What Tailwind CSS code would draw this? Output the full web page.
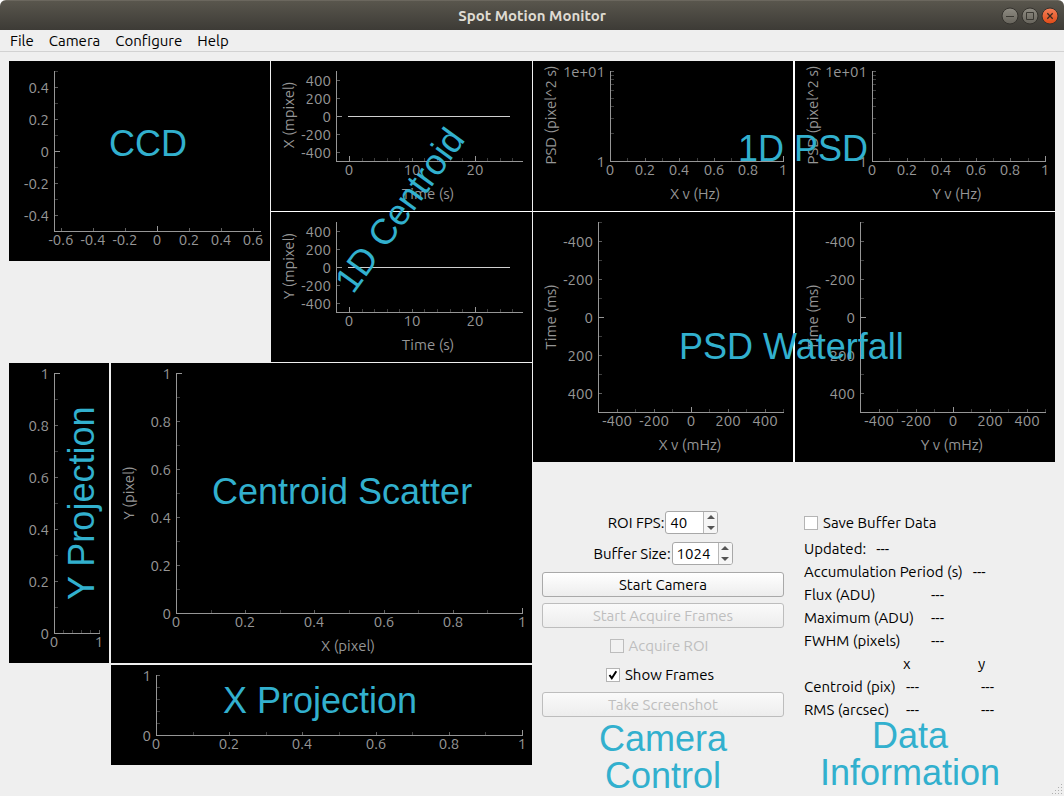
<!DOCTYPE html>
<html lang="en">
<head>
<meta charset="utf-8">
<meta name="viewport" content="width=device-width, initial-scale=1">
<title>Spot Motion Monitor</title>
<script src="https://cdn.jsdelivr.net/npm/@tailwindcss/browser@4"></script>
</head>
<body class="bg-white">
<div class="relative flex min-h-screen flex-col overflow-hidden rounded-t-md bg-[#efefef] font-['Ubuntu','Noto_Sans',sans-serif] text-[15px] leading-[23px] text-black">

  <header class="relative flex h-[30px] items-center justify-center border-t border-[#6b675e] bg-linear-to-b from-[#59564d] to-[#3d3b36]">
    <h1 class="font-bold text-[#dfdbd2]">Spot Motion Monitor</h1>
    <div class="absolute inset-y-0 right-[5px] flex items-center gap-[2px]">
      <button type="button" aria-label="Minimize" class="size-[18px]">
        <svg viewBox="0 0 18 18" class="size-full"><defs><linearGradient id="gray" x2="0" y2="1"><stop stop-color="#8f8c83"/><stop offset="1" stop-color="#66635b"/></linearGradient><linearGradient id="orange" x2="0" y2="1"><stop stop-color="#f58059"/><stop offset="1" stop-color="#df4a16"/></linearGradient></defs><circle cx="9" cy="9" r="8" fill="url(#gray)" stroke="#34322d"/><path d="M5 9.500H13" stroke="#3a3832"/></svg>
      </button>
      <button type="button" aria-label="Maximize" class="size-[18px]">
        <svg viewBox="0 0 18 18" class="size-full"><circle cx="9" cy="9" r="8" fill="url(#gray)" stroke="#34322d"/><path d="M5.500 5.500h7v7h-7z" fill="none" stroke="#3a3832"/></svg>
      </button>
      <button type="button" aria-label="Close" class="size-[18px]">
        <svg viewBox="0 0 18 18" class="size-full"><circle cx="9" cy="9" r="8" fill="url(#orange)" stroke="#34322d"/><path d="M6.300 6.300l5.400 5.400M11.700 6.300l-5.400 5.400" stroke="#3a2a20" stroke-width="1.300"/></svg>
      </button>
    </div>
  </header>

  <nav class="flex h-[22px] items-center gap-[15px] border-b border-[#d2d2d2] px-[10px]">
    <button type="button">File</button>
    <button type="button">Camera</button>
    <button type="button">Configure</button>
    <button type="button">Help</button>
  </nav>

  <main class="relative mx-[9px] mt-[9px] grid grid-cols-[523fr_522fr] items-start gap-px">
    <section class="flex flex-col gap-px" aria-label="Centroid plots">
      <div class="grid grid-cols-2 items-start gap-px">
        <svg data-plot="ccd" class="block w-full bg-black"></svg>
        <div class="flex flex-col gap-px bg-white">
          <svg data-plot="centroidX" class="block w-full bg-black"></svg>
          <svg data-plot="centroidY" class="block w-full bg-black"></svg>
        </div>
      </div>
      <div class="grid grid-cols-[100fr_421fr] gap-0.5">
        <svg data-plot="projectionY" class="block w-full bg-black"></svg>
        <svg data-plot="scatter" class="block w-full bg-black"></svg>
        <svg data-plot="projectionX" class="col-start-2 block w-full bg-black"></svg>
      </div>
    </section>

    <section aria-label="PSD plots and controls">
      <div class="grid grid-cols-2 gap-x-0.5 gap-y-px bg-white">
        <svg data-plot="psdX" class="block w-full bg-black"></svg>
        <svg data-plot="psdY" class="block w-full bg-black"></svg>
        <svg data-plot="waterfallX" class="block w-full bg-black"></svg>
        <svg data-plot="waterfallY" class="block w-full bg-black"></svg>
      </div>

      <div class="mt-12 grid grid-cols-2 gap-x-0.5">
        <form class="flex flex-col gap-1.5 px-[9px]">
          <div class="flex h-[25px] items-center justify-center gap-px">
            <label for="fps">ROI FPS:</label>
            <div class="flex h-[23px] w-[53px] overflow-hidden rounded-[3px] border border-[#a8a8a8] bg-white">
              <input id="fps" type="number" value="40" class="w-0 min-w-0 grow pl-1 outline-none [appearance:textfield] [&::-webkit-inner-spin-button]:appearance-none">
              <div class="flex w-[14px] flex-col border-l border-[#b8b8b8] bg-[#f6f6f6]">
                <button type="button" aria-label="Increase ROI FPS" class="flex grow items-center justify-center"><svg viewBox="0 0 8 4" class="w-2"><path d="M0 4L4 0L8 4z" fill="#555"/></svg></button>
                <button type="button" aria-label="Decrease ROI FPS" class="flex grow items-center justify-center"><svg viewBox="0 0 8 4" class="w-2"><path d="M0 0L4 4L8 0z" fill="#555"/></svg></button>
              </div>
            </div>
          </div>
          <div class="flex h-[25px] items-center justify-center gap-px">
            <label for="buffer">Buffer Size:</label>
            <div class="flex h-[23px] w-[61px] overflow-hidden rounded-[3px] border border-[#a8a8a8] bg-white">
              <input id="buffer" type="number" value="1024" class="w-0 min-w-0 grow pl-1 outline-none [appearance:textfield] [&::-webkit-inner-spin-button]:appearance-none">
              <div class="flex w-[14px] flex-col border-l border-[#b8b8b8] bg-[#f6f6f6]">
                <button type="button" aria-label="Increase buffer size" class="flex grow items-center justify-center"><svg viewBox="0 0 8 4" class="w-2"><path d="M0 4L4 0L8 4z" fill="#555"/></svg></button>
                <button type="button" aria-label="Decrease buffer size" class="flex grow items-center justify-center"><svg viewBox="0 0 8 4" class="w-2"><path d="M0 0L4 4L8 0z" fill="#555"/></svg></button>
              </div>
            </div>
          </div>
          <button type="button" class="h-[25px] rounded-[3px] border border-[#a9a9a9] bg-linear-to-b from-white to-[#ededed]">Start Camera</button>
          <button type="button" disabled class="h-[25px] rounded-[3px] border border-[#bdbdbd] bg-linear-to-b from-[#fafafa] to-[#ededed] text-[#bebebe]">Start Acquire Frames</button>
          <label class="flex h-[23px] items-center justify-center gap-[5px] pr-2 text-[#bebebe]">
            <input type="checkbox" disabled class="size-[14px] appearance-none border border-[#bdbdbd] bg-[#f2f2f2]">Acquire ROI
          </label>
          <label class="flex h-[23px] items-center justify-center gap-[5px] pr-1.5">
            <span class="grid size-[14px]">
              <input type="checkbox" checked class="peer col-start-1 row-start-1 size-[14px] appearance-none border border-[#b4b4b4] bg-white">
              <svg viewBox="0 0 14 14" class="pointer-events-none invisible col-start-1 row-start-1 size-[14px] peer-checked:visible"><path d="M3.500 7L5.800 10.300L10.300 3.300" fill="none" stroke="#000" stroke-width="2"/></svg>
            </span>Show Frames
          </label>
          <button type="button" disabled class="h-[25px] rounded-[3px] border border-[#bdbdbd] bg-linear-to-b from-[#fafafa] to-[#ededed] text-[#bebebe]">Take Screenshot</button>
          <p class="-mt-[3px] text-center font-['Liberation_Sans',sans-serif] text-4xl leading-[37px] text-[#32b0ce]">Camera<br>Control</p>
        </form>

        <div class="px-[9px] pt-px">
          <label class="mb-[3px] flex h-[23px] items-center gap-[5px]">
            <input type="checkbox" class="size-[14px] appearance-none border border-[#b4b4b4] bg-white">Save Buffer Data
          </label>
          <p class="flex h-[23px] items-center gap-[10px]"><span>Updated:</span><span>---</span></p>
          <p class="flex h-[23px] items-center gap-[10px]"><span>Accumulation Period (s)</span><span>---</span></p>
          <table class="text-left">
            <tbody>
              <tr class="h-[23px]"><th scope="row" class="w-[127px] font-normal">Flux (ADU)</th><td>---</td></tr>
              <tr class="h-[23px]"><th scope="row" class="font-normal">Maximum (ADU)</th><td>---</td></tr>
              <tr class="h-[23px]"><th scope="row" class="font-normal">FWHM (pixels)</th><td>---</td></tr>
            </tbody>
          </table>
          <table class="text-left">
            <thead>
              <tr class="h-[23px]"><td class="w-[99px]"></td><th scope="col" class="w-[75px] font-normal">x</th><th scope="col" class="font-normal">y</th></tr>
            </thead>
            <tbody>
              <tr class="h-[23px]"><th scope="row" class="font-normal">Centroid (pix)</th><td class="pl-[3px]">---</td><td class="pl-[3px]">---</td></tr>
              <tr class="h-[23px]"><th scope="row" class="font-normal">RMS (arcsec)</th><td class="pl-[3px]">---</td><td class="pl-[3px]">---</td></tr>
            </tbody>
          </table>
          <p class="-mt-1 mr-[30px] text-center font-['Liberation_Sans',sans-serif] text-4xl leading-[37px] text-[#32b0ce]">Data<br>Information</p>
        </div>
      </div>
    </section>

    <!-- Region names laid over the plots; scales with the plot grid -->
    <svg viewBox="0 0 1046 704" class="pointer-events-none absolute inset-x-0 top-0 w-full fill-[#32b0ce] font-['Liberation_Sans',sans-serif] text-4xl">
      <text x="139" y="95" text-anchor="middle">CCD</text>
      <text transform="translate(344 234) rotate(-54)">1D Centroid</text>
      <text x="729" y="100">1D PSD</text>
      <text x="670" y="298">PSD Waterfall</text>
      <text transform="translate(85 539) rotate(-90)">Y Projection</text>
      <text x="203" y="443">Centroid Scatter</text>
      <text x="214" y="652">X Projection</text>
    </svg>
  </main>

  <svg viewBox="0 0 12 12" class="absolute right-0 bottom-0 size-3 fill-[#b0b0b0]" aria-hidden="true"><path d="M9 0h1v1h-1zM6 3h1v1h-1zM9 3h1v1h-1zM3 6h1v1h-1zM6 6h1v1h-1zM9 6h1v1h-1zM0 9h1v1h-1zM3 9h1v1h-1zM6 9h1v1h-1zM9 9h1v1h-1z"/></svg>
</div>

<script>
// A tick is [position, level, label]; level 0 is the longest and brightest.
const LEVELS = [{ len: 6, color: '#969696' }, { len: 4, color: '#5f5f5f' }, { len: 4, color: '#3c3c3c' }];
const series = (start, step, labels, levelOf) =>
  labels.map((label, i) => [Math.round(start + step * i), levelOf(label, i), label]);
const byLabel = (...bright) => label => bright.includes(label) ? 0 : label === '' ? 2 : 1;

const centroid = name => ({
  w: 261, h: 150, x0: 65, y0: 10, x1: 252, y1: 100,
  x: series(78, 12.57, ['0', '', '', '', '', '10', '', '', '', '', '20', '', '', ''], byLabel('0', '20')),
  y: series(19, 18, ['400', '200', '0', '-200', '-400'], byLabel('0')),
  xName: ['Time (s)', 157], yName: [name + ' (mpixel)', 54], line: [77, 239, 55],
});
const psd = name => ({
  w: 260, h: 150, x0: 77, y0: 10, x1: 251, y1: 100,
  x: series(77, 17.3, ['0', '', '0.2', '', '0.4', '', '0.6', '', '0.8', '', '1'], byLabel('0', '1')),
  y: [[10, 1, '1e+01'], [14, 2, ''], [18, 2, ''], [23, 2, ''], [29, 2, ''], [37, 2, ''], [45, 2, ''], [57, 2, ''], [72, 2, ''], [100, 0, '1']],
  xName: [name + ' v (Hz)', 162], yName: ['PSD (pixel^2 s)', 54],
});
const waterfall = name => ({
  w: 260, h: 250, x0: 65, y0: 10, x1: 251, y1: 200,
  x: series(83.9, 18.5, ['-400', '', '-200', '', '0', '', '200', '', '400', ''], byLabel('0')),
  y: series(10, 19, ['', '-400', '', '-200', '', '0', '', '200', '', '400'], byLabel('0')),
  xName: [name + ' v (mHz)', 157], yName: ['Time (ms)', 105],
});
const unitDown = ['1', '', '0.8', '', '0.6', '', '0.4', '', '0.2', '', '0'];
const unitUp = [...unitDown].reverse();

const plots = {
  ccd: {
    w: 261, h: 200, x0: 45, y0: 10, x1: 252, y1: 170,
    x: series(52, 32, ['-0.6', '-0.4', '-0.2', '0', '0.2', '0.4', '0.6'], byLabel('0')),
    y: series(10, 16, ['', '0.4', '', '0.2', '', '0', '', '-0.2', '', '-0.4'], byLabel('0')),
  },
  centroidX: centroid('X'), centroidY: centroid('Y'),
  psdX: psd('X'), psdY: psd('Y'),
  waterfallX: waterfall('X'), waterfallY: waterfall('Y'),
  projectionY: {
    w: 100, h: 300, x0: 45, y0: 10, x1: 91, y1: 270,
    x: series(45, 9, ['0', '', '', '', '', '1'], byLabel('0')),
    y: series(10, 26, unitDown, byLabel('0', '1')),
  },
  scatter: {
    w: 421, h: 300, x0: 65, y0: 10, x1: 412, y1: 250,
    x: series(65, 34.6, unitUp, byLabel('0', '1')),
    y: series(10, 24, unitDown, byLabel('0', '1')),
    xName: ['X (pixel)', 237], yName: ['Y (pixel)', 130],
  },
  projectionX: {
    w: 421, h: 100, x0: 45, y0: 10, x1: 412, y1: 70,
    x: series(45, 36.6, unitUp, byLabel('0', '1')),
    y: series(10, 12, ['1', '', '', '', '', '0'], byLabel('0')),
  },
};

const rect = (x, y, w, h, fill) => `<rect x="${x}" y="${y}" width="${w}" height="${h}" fill="${fill}"/>`;
const text = (x, y, anchor, s) => `<text x="${x}" y="${y}" text-anchor="${anchor}" fill="#969696">${s}</text>`;

document.querySelectorAll('[data-plot]').forEach(svg => {
  const p = plots[svg.dataset.plot];
  let out = '';
  for (const [pos, level, label] of p.x) {
    const { len, color } = LEVELS[level];
    out += rect(pos, p.y1 - len + 1, 1, len, color);
    if (label) out += text(pos, p.y1 + 14, 'middle', label);
  }
  for (const [pos, level, label] of p.y) {
    const { len, color } = LEVELS[level];
    out += rect(p.x0, pos, len, 1, color);
    if (label) out += text(p.x0 - 5, pos + 6, 'end', label);
  }
  out += rect(p.x0, p.y0, 1, p.y1 - p.y0 + 1, '#969696') + rect(p.x0, p.y1, p.x1 - p.x0, 1, '#969696');
  if (p.line) out += rect(p.line[0], p.line[2], p.line[1] - p.line[0], 1, '#d0d0d0');
  if (p.xName) out += text(p.xName[1], p.y1 + 38, 'middle', p.xName[0]);
  if (p.yName) out += `<text transform="translate(23 ${p.yName[1]}) rotate(-90)" text-anchor="middle" fill="#969696">${p.yName[0]}</text>`;
  svg.setAttribute('viewBox', `0 0 ${p.w} ${p.h}`);
  svg.innerHTML = out;
});
</script>
</body>
</html>
